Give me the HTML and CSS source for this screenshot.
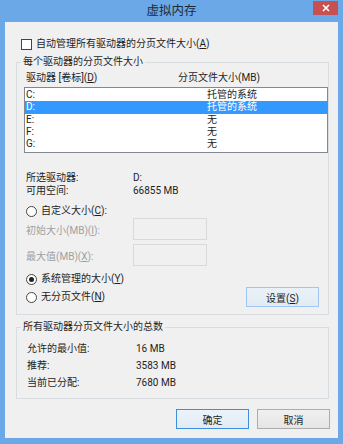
FILE: index.html
```html
<!DOCTYPE html>
<html lang="zh-CN">
<head>
    <meta charset="UTF-8">
    <title>虚拟内存</title>
    <link rel="stylesheet" href="styles.css">
</head>
<body>
    <div class="window">
        <div class="titlebar">
            <span class="title">虚拟内存</span>
            <span class="close">
                <svg width="8" height="8" viewBox="0 0 8 8"><path d="M1 1L7 7M7 1L1 7" stroke="#fff" stroke-width="1.6"/></svg>
            </span>
        </div>

        <div class="dialog">
            <div class="check-row">
                <span class="checkbox"></span>
                <span>自动管理所有驱动器的分页文件大小(<u>A</u>)</span>
            </div>

            <fieldset class="group group-drives">
                <legend>每个驱动器的分页文件大小</legend>

                <div class="list-head">
                    <span class="col-drive">驱动器 [卷标](<u>D</u>)</span>
                    <span>分页文件大小(MB)</span>
                </div>

                <div class="drive-list">
                    <div class="drive-row"><span class="col-letter">C:</span><span>托管的系统</span></div>
                    <div class="drive-row selected"><span class="col-letter">D:</span><span>托管的系统</span></div>
                    <div class="drive-row"><span class="col-letter">E:</span><span>无</span></div>
                    <div class="drive-row"><span class="col-letter">F:</span><span>无</span></div>
                    <div class="drive-row"><span class="col-letter">G:</span><span>无</span></div>
                </div>

                <div class="info">
                    <div class="info-row"><span class="info-label">所选驱动器:</span><span>D:</span></div>
                    <div class="info-row"><span class="info-label">可用空间:</span><span>66855 MB</span></div>
                </div>

                <div class="radio-row first">
                    <span class="radio"></span>
                    <span>自定义大小(<u>C</u>):</span>
                </div>

                <div class="size-row">
                    <span class="size-label">初始大小(MB)(<u>I</u>):</span>
                    <span class="size-input"></span>
                </div>
                <div class="size-row second">
                    <span class="size-label">最大值(MB)(<u>X</u>):</span>
                    <span class="size-input"></span>
                </div>

                <div class="radio-row managed">
                    <span class="radio checked"></span>
                    <span>系统管理的大小(<u>Y</u>)</span>
                </div>

                <div class="last-row">
                    <div class="radio-row">
                        <span class="radio"></span>
                        <span>无分页文件(<u>N</u>)</span>
                    </div>
                    <button class="btn btn-set">设置(<u>S</u>)</button>
                </div>
            </fieldset>

            <fieldset class="group group-total">
                <legend>所有驱动器分页文件大小的总数</legend>
                <div class="total-row"><span class="total-label">允许的最小值:</span><span>16 MB</span></div>
                <div class="total-row"><span class="total-label">推荐:</span><span>3583 MB</span></div>
                <div class="total-row"><span class="total-label">当前已分配:</span><span>7680 MB</span></div>
            </fieldset>

            <div class="actions">
                <button class="btn btn-default">确定</button>
                <button class="btn">取消</button>
            </div>
        </div>
    </div>
</body>
</html>
```

FILE: styles.css
```css
body {
    margin: 0;
    font-family: Roboto, "Noto Sans CJK SC", sans-serif;
    font-size: 10px;
    color: #1e1e1e;
    background-color: #6aa8e8;
}
u {
    text-decoration: underline;
}
.window {
    width: 343px;
    height: 444px;
    background-color: #6aa8e8;
}
.titlebar {
    position: relative;
    height: 22px;
    display: flex;
    justify-content: center;
    align-items: center;
}
.title {
    font-size: 12.5px;
    color: #1c2a3a;
    line-height: 22px;
}
.close {
    position: absolute;
    top: 1px;
    right: 5px;
    width: 25px;
    height: 14px;
    background-color: #c75050;
    display: flex;
    justify-content: center;
    align-items: center;
}
.dialog {
    margin: 0 5px;
    height: 416px;
    background-color: #f0f0f0;
    padding-top: 16px;
    box-sizing: border-box;
}
.check-row {
    display: flex;
    align-items: center;
    height: 12px;
    line-height: 12px;
    padding-left: 16px;
}
.checkbox {
    width: 9px;
    height: 9px;
    border: 1px solid #444;
    background: #fff;
    margin-right: 4px;
}
.group {
    margin: 6px 9px 0 11px;
    padding: 0;
    border: 1px solid #d8dde2;
    border-radius: 0;
}
.group legend {
    margin-left: 4px;
    padding: 0 2px;
    line-height: 12px;
    height: 12px;
}
.group-drives {
    padding-bottom: 7px;
}
.list-head {
    display: flex;
    height: 12px;
    line-height: 12px;
    margin-top: 4px;
    padding-left: 9px;
}
.col-drive {
    width: 152px;
}
.drive-list {
    margin: 3px 0 0 7px;
    width: 304px;
    height: 66px;
    box-sizing: border-box;
    border: 1px solid #828790;
    background: #fff;
    padding-top: 1px;
}
.drive-row {
    display: flex;
    height: 12.3px;
    line-height: 12.3px;
    padding-left: 1px;
}
.drive-row.selected {
    background-color: #3399ff;
    color: #fff;
}
.col-letter {
    width: 181px;
}
.info {
    margin-top: 18px;
    padding-left: 9px;
}
.info-row {
    display: flex;
    height: 13px;
    line-height: 13px;
}
.info-label {
    width: 107px;
}
.radio-row {
    display: flex;
    align-items: center;
    height: 12px;
    line-height: 12px;
    padding-left: 9px;
}
.radio-row.first {
    margin-top: 8px;
}
.radio-row.managed {
    margin-top: 7px;
}
.radio {
    width: 9px;
    height: 9px;
    border: 1px solid #444;
    border-radius: 50%;
    background: #fff;
    margin-right: 4px;
    display: flex;
    justify-content: center;
    align-items: center;
}
.radio.checked::after {
    content: "";
    width: 5px;
    height: 5px;
    border-radius: 50%;
    background: #222;
}
.size-row {
    display: flex;
    align-items: center;
    height: 22px;
    margin-top: 1px;
    padding-left: 9px;
    color: #a0a0a0;
}
.size-row.second {
    margin-top: 4px;
}
.size-label {
    width: 107px;
}
.size-input {
    width: 74px;
    height: 22px;
    box-sizing: border-box;
    border: 1px solid #d9d9d9;
    background: #f0f0f0;
}
.last-row {
    display: flex;
    align-items: center;
    justify-content: space-between;
    height: 20px;
    margin-top: 2px;
    padding-right: 9px;
}
.last-row .radio-row {
    padding-left: 9px;
}
.btn {
    font-family: inherit;
    font-size: 10px;
    color: #1e1e1e;
    height: 20px;
    padding: 0;
    border: 1px solid #acacac;
    background: linear-gradient(#f0f0f0, #e5e5e5);
    border-radius: 0;
}
.btn-set {
    width: 73px;
    border-color: #9ec6ee;
    background: linear-gradient(#eaf1f8, #e2ebf4);
}
.group-total {
    padding-bottom: 7px;
}
.total-row {
    display: flex;
    height: 17px;
    line-height: 17px;
    padding-left: 10px;
}
.group-total legend + .total-row {
    margin-top: 7px;
}
.total-label {
    width: 109px;
}
.actions {
    display: flex;
    justify-content: flex-end;
    gap: 8px;
    margin: 10px 8px 0 0;
}
.actions .btn {
    width: 73px;
}
.btn-default {
    border-color: #3c8fde;
    background: linear-gradient(#ecf3fa, #e2ebf4);
}
```
